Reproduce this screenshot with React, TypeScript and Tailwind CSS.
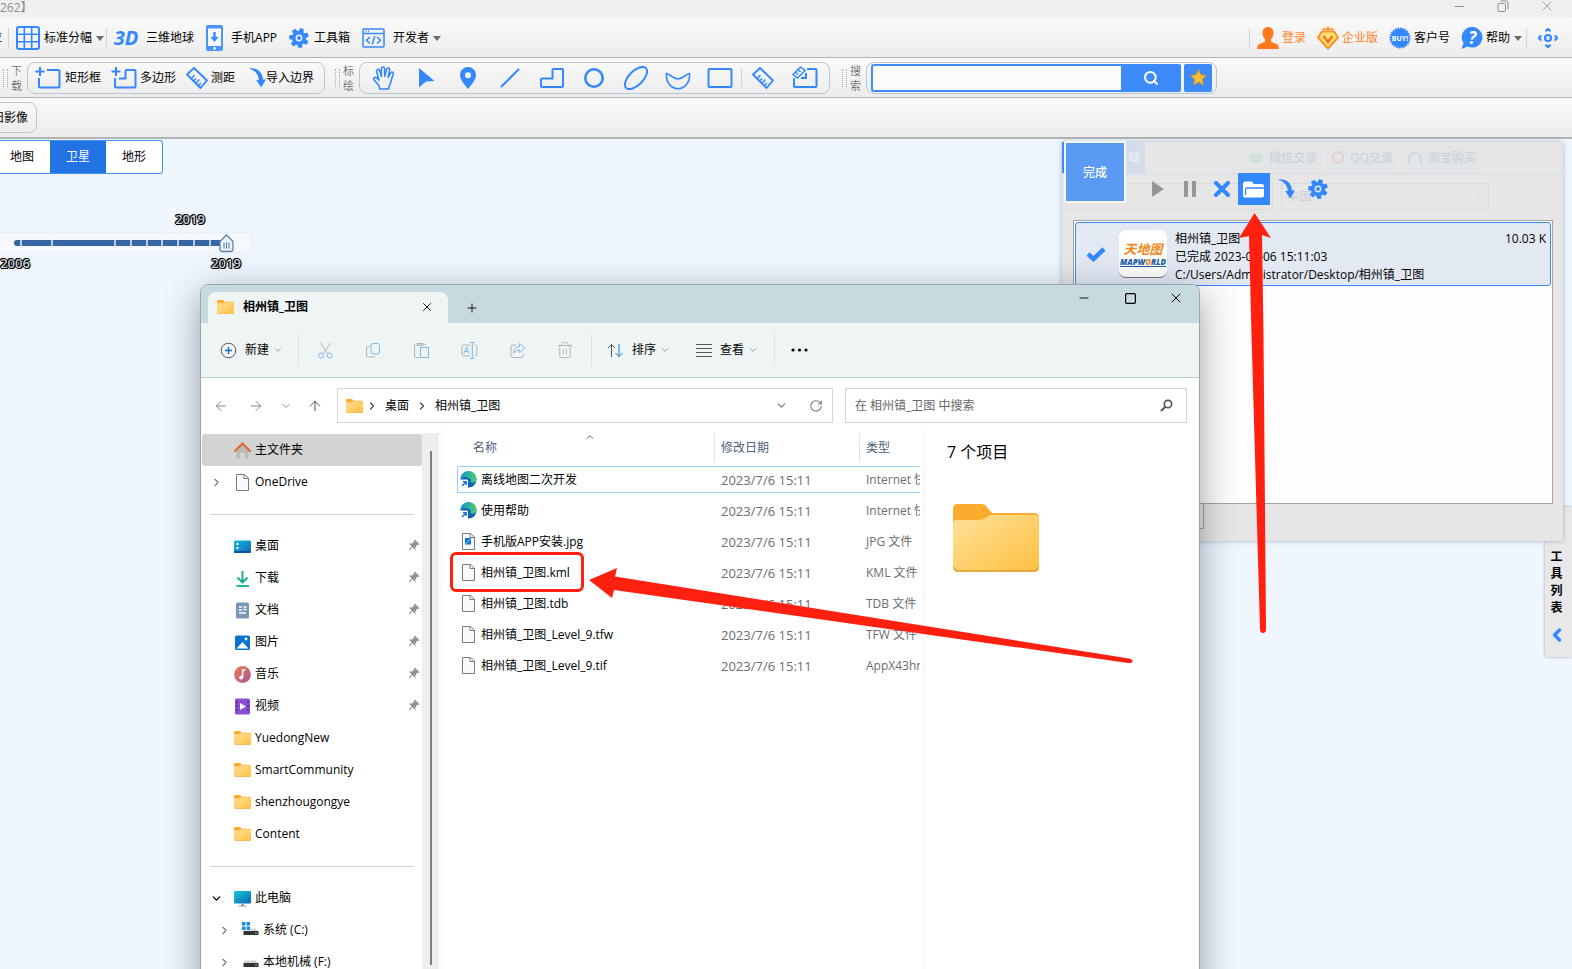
import React from "react";
import {
  ArrowLeft, ArrowRight, ArrowUp, ChevronDown, ChevronRight, ChevronUp, ChevronLeft,
  RotateCw, Trash2, X, Plus, Minus, Square, Search,
} from "lucide-react";
import { MdPushPin } from "react-icons/md";

type Kids = { children?: React.ReactNode };

/* ---------- drawings ---------- */

const Caret = () => (
  <svg width="8" height="5" viewBox="0 0 8 5" aria-hidden="true"><path d="M0 0h8L4 5z" fill="#6b6b6b" /></svg>
);

const GridIcon = () => (
  <svg width="24" height="24" viewBox="0 0 24 24" fill="none" stroke="#3388ff" strokeWidth="2" aria-hidden="true">
    <rect x="1" y="1" width="22" height="22" rx="2" />
    <path d="M8.300 1v22M15.700 1v22M1 8.300h22M1 15.700h22" strokeWidth="1.600" />
  </svg>
);

const PhoneIcon = () => (
  <svg width="17" height="26" viewBox="0 0 17 26" aria-hidden="true">
    <rect width="17" height="26" rx="2" fill="#4a94fb" />
    <rect x="2" y="3.500" width="13" height="17.500" fill="#f6f8fb" />
    <path d="M8.500 7v7" stroke="#3388ff" strokeWidth="2.400" />
    <path d="M4.500 12h8l-4 5z" fill="#3388ff" />
    <circle cx="8.500" cy="23.400" r="1.300" fill="#fff" />
  </svg>
);

const GearIcon = () => (
  <svg width="20" height="20" viewBox="-10 -10 20 20" aria-hidden="true">
    {[0, 1, 2, 3, 4, 5, 6].map((i) => (
      <path key={i} d="M-2.800 -5L-1.900 -9.800h3.800L2.800 -5z" fill="#3388ff" transform={`rotate(${i * 51.43 + 18})`} />
    ))}
    <circle r="5.200" fill="none" stroke="#3388ff" strokeWidth="3.600" />
    <circle r="1.900" fill="#3388ff" />
  </svg>
);

const CodeIcon = () => (
  <svg width="23" height="20" viewBox="0 0 23 20" fill="none" stroke="#3388ff" strokeWidth="1.500" aria-hidden="true">
    <rect x="1" y="1" width="21" height="18" rx="1" />
    <path d="M1 5.500h21M3.500 3.300h1M6 3.300h1M8 9l-3.500 3.200L8 15.500M15 9l3.500 3.200L15 15.500M12.800 8l-2.600 8.500" />
  </svg>
);

const UserIcon = () => (
  <svg width="22" height="22" viewBox="0 0 22 22" fill="#ff7a1a" aria-hidden="true">
    <path d="M11 0c3.600 0 5.500 2.500 5.500 6 0 3-1.200 5-2.500 6.300v2.200c1.500 1.500 7 2 7.500 4.500l.5 3H0l.5-3c.5-2.500 6-3 7.500-4.500v-2.200C6.700 11 5.500 9 5.500 6c0-3.500 1.900-6 5.500-6z" />
  </svg>
);

const GemIcon = () => (
  <svg width="22" height="24" viewBox="0 0 22 24" aria-hidden="true">
    <path d="M5 4L6.500 1.500 9 3l2-3 2 3 2.500-1.500L17 4z" fill="#ff9a2a" />
    <path d="M5 5.500h12l4 6L11 22.500 1 11.500z" fill="#ffe27a" stroke="#ff9226" strokeWidth="2" strokeLinejoin="round" />
    <path d="M6.500 10l4.500 6 4.500-6" fill="none" stroke="#f47a20" strokeWidth="2.600" />
  </svg>
);

const BuyBadge = () => (
  <svg width="22" height="22" viewBox="-11 -11 22 22" aria-hidden="true">
    <circle r="9.500" fill="#3388ff" />
    <circle r="9.800" fill="none" stroke="#3388ff" strokeWidth="1.600" strokeDasharray="1.500 1.050" />
    <text y="2.500" textAnchor="middle" fontSize="7" fontWeight="700" fill="#fff" fontFamily="Open Sans, sans-serif">BUY!</text>
  </svg>
);

const HelpIcon = () => (
  <svg width="22" height="24" viewBox="0 0 22 24" aria-hidden="true">
    <path d="M11.500 1A10.300 10.300 0 1 1 6.500 20.500L.5 23l2-6A10.300 10.300 0 0 1 11.500 1z" fill="#3388ff" />
    <text x="11.500" y="17.500" textAnchor="middle" fontSize="17" fontWeight="700" fontStyle="italic" fill="#fff" fontFamily="Open Sans, sans-serif">?</text>
  </svg>
);

const TargetIcon = () => (
  <svg width="20" height="20" viewBox="0 0 20 20" fill="none" stroke="#3388ff" strokeWidth="2.200" aria-hidden="true">
    <circle cx="10" cy="10" r="3" />
    <path d="M7.500 3.200L10 .9l2.500 2.300M7.500 16.800l2.500 2.300 2.500-2.300M3.200 7.500L.9 10l2.300 2.500M16.800 7.500L19.100 10l-2.300 2.500" />
  </svg>
);

const RectPlusIcon = () => (
  <svg width="26" height="22" viewBox="0 0 26 22" fill="none" stroke="#3388ff" strokeWidth="2" aria-hidden="true">
    <path d="M5 0v9M.5 4.500h9M12 3h11.500a1 1 0 0 1 1 1v15.500a1 1 0 0 1-1 1H5a1 1 0 0 1-1-1V11" />
  </svg>
);

const PolyPlusIcon = () => (
  <svg width="26" height="22" viewBox="0 0 26 22" fill="none" stroke="#3388ff" strokeWidth="2" aria-hidden="true">
    <path d="M5 0v9M.5 4.500h9M4 11v8.500a1 1 0 0 0 1 1h18.500a1 1 0 0 0 1-1V4a1 1 0 0 0-1-1h-8a1 1 0 0 0-1 1v7.500H8" />
  </svg>
);

const RulerIcon = () => (
  <svg width="22" height="22" viewBox="0 0 22 22" fill="none" stroke="#3388ff" strokeWidth="1.900" strokeLinejoin="round" aria-hidden="true">
    <path d="M8 1l13 12.500-6.500 7.500L1 7.500z" />
    <path d="M5.500 11.500l3-3.500M8 13.800l2-2.300M10.400 16l3-3.500M12.800 18.300l2-2.300" strokeWidth="1.500" />
  </svg>
);

const ImportArrow = () => (
  <svg width="17" height="20" viewBox="0 0 17 20" fill="#3388ff" aria-hidden="true">
    <path d="M0 .5C7-.5 13.500 3 14 11.500h3l-4.800 8-5-7.500h2.600C9.800 6 5 2 0 .5z" />
  </svg>
);

const HandIcon = () => (
  <svg width="22" height="24" viewBox="0 0 21 23" fill="none" stroke="#3388ff" strokeWidth="1.500" strokeLinejoin="round" aria-hidden="true">
    <path d="M6.500 22L5.500 18.500 1 13.500Q0 11.800 1.500 11 3 10.500 4.500 12.500L5.700 13.500 3.500 5.500Q3.200 3.800 4.500 3.300 6 3 6.500 4.800L8 10 8 2.500Q8 1 9.500 1 11 1 11 2.500L11.200 10 13 3Q13.500 1.500 15 2 16.200 2.500 15.800 4L14.500 11 17 6.500Q17.800 5.200 19 6 19.800 6.700 19.300 8L17.500 13.500Q17 17 15.500 19L15 22Z" />
  </svg>
);

const S = ({ children }: Kids) => (
  <svg width="26" height="24" viewBox="0 0 26 24" fill="none" stroke="#3388ff" strokeWidth="2" aria-hidden="true">{children}</svg>
);

const DRAW_TOOLS: { name: string; icon: React.ReactNode }[] = [
  { name: "平移", icon: <HandIcon /> },
  { name: "选择", icon: <S><path d="M6 2l15.500 13-8.500.5L6 21.500z" fill="#3388ff" stroke="none" /></S> },
  { name: "标注点", icon: <S><path fillRule="evenodd" stroke="none" fill="#3388ff" d="M13 1a8 8 0 0 1 8 8c0 5-5 10-8 14C10 19 5 14 5 9a8 8 0 0 1 8-8zm0 5.300a3 3 0 1 0 0 6 3 3 0 0 0 0-6z" /></S> },
  { name: "画线", icon: <S><path d="M4 21L22 3" /></S> },
  { name: "多边形", icon: <S><path d="M14.500 3h8.500a1 1 0 0 1 1 1v16a1 1 0 0 1-1 1H3a1 1 0 0 1-1-1v-6.500a1 1 0 0 1 1-1h10.500V4a1 1 0 0 1 1-1z" /></S> },
  { name: "圆", icon: <S><circle cx="13" cy="12" r="8.700" strokeWidth="2.600" /></S> },
  { name: "椭圆", icon: <S><ellipse cx="13" cy="12" rx="14" ry="7" transform="rotate(-45 13 12)" /></S> },
  { name: "扇形", icon: <S><path d="M1.500 7.500C5 8 7.500 12.500 13 13c5.500-.5 8-5 11.500-5.500C25.500 16 20 22.700 13 22.700S.5 16 1.500 7.500z" strokeWidth="1.600" /></S> },
  { name: "矩形", icon: <S><rect x="1.500" y="3" width="23" height="18" rx="1" /></S> },
];

const Folder = ({ w = 17, h = 14 }: { w?: number; h?: number }) => (
  <svg width={w} height={h} viewBox="0 0 86 68" preserveAspectRatio="none" className="shrink-0" aria-hidden="true">
    <defs>
      <linearGradient id="fold" x1="0" y1="0" x2="1" y2="1">
        <stop offset="0" stopColor="#ffe19a" /><stop offset="1" stopColor="#ffc03f" />
      </linearGradient>
    </defs>
    <path d="M0 5q0-5 5-5h23q4 0 6 3l5 6h42q5 0 5 5v20H0z" fill="#fbab2d" />
    <path d="M0 20q0-4 4-4h23q4 0 7-3l3-2h45q4 0 4 4v48q0 5-5 5H5q-5 0-5-5z" fill="url(#fold)" />
    <path d="M1 63q0 4 4 4h76q4 0 4-4" fill="none" stroke="#e0a136" strokeWidth="1.500" />
  </svg>
);

const Page = ({ image = false }: { image?: boolean }) => (
  <svg width="17" height="17" viewBox="0 0 17 17" fill="#fafafa" stroke="#7b7b7b" aria-hidden="true" className="shrink-0">
    <path d="M2.500.5h8L14.500 4v12.500h-12z" /><path d="M10 .5v4h4.500" fill="none" />
    {image && <><rect x="5" y="5" width="6" height="6.500" fill="#1173d0" stroke="none" /><path d="M5.500 11l5-5" stroke="#9bd0ff" /></>}
  </svg>
);

const EdgeIcon = () => (
  <svg width="17" height="17" viewBox="0 0 17 17" aria-hidden="true" className="shrink-0">
    <defs><linearGradient id="edge" x1="0" y1="0" x2="1" y2="0"><stop offset="0" stopColor="#1593d6" /><stop offset="1" stopColor="#4ccf6c" /></linearGradient></defs>
    <circle cx="8.500" cy="8.500" r="8" fill="#0c62b4" />
    <path d="M.5 8A8 8 0 0 1 16.500 8c0 3-2.500 4.200-5 3.600-2-.5-.5-1.600-1-3C9.500 6 3.500 5 .5 8z" fill="url(#edge)" />
    <rect x="0" y="8.500" width="8" height="8" rx="1" fill="#fff" />
    <path d="M2 15l4-4M3 10.800h3.200V14" stroke="#1a73d9" strokeWidth="1.400" fill="none" />
  </svg>
);

const Ic = ({ children }: Kids) => (
  <svg width="17" height="17" viewBox="0 0 17 17" aria-hidden="true" className="shrink-0">{children}</svg>
);

const HomeIcon = () => (
  <Ic>
    <path d="M2.500 8L8.500 2.500 14.500 8v7.500q0 1-1 1H11v-6H6v6H3.500q-1 0-1-1z" fill="#b9b9b9" />
    <path d="M1 9l7.500-7.500L16 9" fill="none" stroke="#e2682a" strokeWidth="2" strokeLinecap="round" />
  </Ic>
);
const DesktopIcon = () => (
  <Ic>
    <defs><linearGradient id="desk" x1="0" y1="0" x2="1" y2="1"><stop offset="0" stopColor="#1cb9e0" /><stop offset="1" stopColor="#0c68b8" /></linearGradient></defs>
    <rect y="2.500" width="17" height="12.500" rx="1" fill="url(#desk)" /><path d="M0 13h17v1q0 1-1 1H1q-1 0-1-1z" fill="#0b559c" /><rect x="2.500" y="5" width="2" height="2" fill="#fff" /><rect x="2.500" y="9" width="2" height="2" fill="#fff" />
  </Ic>
);
const DownloadIcon = () => (
  <Ic><path d="M8.500 1v11M3.500 7.500l5 5 5-5" fill="none" stroke="#17a98c" strokeWidth="1.900" /><path d="M2.500 16h12.500" stroke="#17b58c" strokeWidth="1.900" /></Ic>
);
const DocIcon = () => (
  <Ic><rect x="2" y=".5" width="13" height="16" rx="1.500" fill="#7c97b5" /><path d="M5 5h3M5 8h3M5 11h7M9.500 5h3M9.500 7.500h3" stroke="#fff" strokeWidth="1.500" /></Ic>
);
const PictureIcon = () => (
  <Ic><rect x="1" y="1.500" width="15" height="14.500" rx="1.500" fill="#0a74cf" /><path d="M2.500 14.500L8.500 8l6 6.500z" fill="#fff" /><circle cx="12" cy="5" r="1.400" fill="#fff" /></Ic>
);
const MusicIcon = () => (
  <Ic>
    <defs><linearGradient id="mus" x1="0" y1="0" x2="1" y2="1"><stop offset="0" stopColor="#f0824a" /><stop offset="1" stopColor="#a4529a" /></linearGradient></defs>
    <circle cx="8.500" cy="8.500" r="8.400" fill="url(#mus)" /><circle cx="7.200" cy="11.500" r="2" fill="#fff" /><path d="M8.600 11.500V4h3" fill="none" stroke="#fff" strokeWidth="1.500" />
  </Ic>
);
const VideoIcon = () => (
  <Ic><rect x="1" y=".5" width="15" height="16" rx="1.500" fill="#8a4fd0" /><path d="M3 3v11M14 3v11" stroke="#5a2a9c" strokeWidth="1.600" strokeDasharray="2 2" /><path d="M6 5l6 3.500L6 12z" fill="#fff" /></Ic>
);
const PcIcon = () => (
  <Ic>
    <defs><linearGradient id="pc" x1="0" y1="0" x2="1" y2="1"><stop offset="0" stopColor="#18c5dc" /><stop offset="1" stopColor="#0a6bb0" /></linearGradient></defs>
    <rect y="1" width="17" height="12.500" rx="1" fill="url(#pc)" /><path d="M7 13.500h3v2H7zM4.500 15.500h8v1h-8z" fill="#9aa4ab" />
  </Ic>
);
const DriveIcon = ({ system = false }: { system?: boolean }) => (
  <Ic>
    <path d="M3 6.500h11l2 3H1z" fill="#d4d4d4" /><rect x="1.500" y="9" width="15" height="4" rx=".5" fill="#333" /><rect x="13" y="10.500" width="2" height="1" fill="#4be08a" />
    {system && <><path d="M0 0h8.500v8.500H0z" fill="#fff" /><path d="M0 0h3.500v3.500H0zM4.500 0H8v3.500H4.500zM0 4.500h3.500V8H0zM4.500 4.500H8V8H4.500z" fill="#1a8fe0" /></>}
  </Ic>
);

/* ---------- top bars ---------- */

const Sep = () => <span className="h-5 w-px shrink-0 bg-[#d4d4d4]" />;

const Tool = ({ icon, label, caret, gap = "gap-2" }: { icon?: React.ReactNode; label: string; caret?: boolean; gap?: string }) => (
  <button type="button" className={`flex shrink-0 items-center whitespace-nowrap ${gap}`}>
    {icon}
    <span className="flex items-center gap-1">{label}{caret && <Caret />}</span>
  </button>
);

const Grip = ({ a, b }: { a: string; b: string }) => (
  <div className="flex shrink-0 items-center gap-[3px] font-light text-[#444]">
    <span className="h-[18px] w-[5px] border-x border-dotted border-[#aaa]" />
    <span className="flex w-[12px] flex-col text-[11px] leading-[15px]"><span>{a}</span><span>{b}</span></span>
  </div>
);

const BAR = "flex h-[40px] shrink-0 items-center border-b border-[#b4b4b4] bg-linear-to-b from-[#fafafa] to-[#ececec]";
const GROUP = "flex h-[32px] shrink-0 items-center rounded-lg border border-[#bac8d4]";

function TopBars() {
  return (
    <header>
      <div className="flex h-[18px] items-start justify-between bg-[#f0f0f0] pr-[17px] text-[#8d8d8d]">
        <span className="leading-4">262】</span>
        <div className="flex h-[12px] items-center gap-[30px]">
          <button type="button" aria-label="最小化"><Minus size={15} strokeWidth={1.500} /></button>
          <button type="button" aria-label="还原">
            <svg width="12" height="12" viewBox="0 0 12 12" fill="none" stroke="#8d8d8d"><rect x="1" y="3.500" width="7.500" height="8" rx="1" /><path d="M3.500 1h5.500q2 0 2 2v6" /></svg>
          </button>
          <button type="button" aria-label="关闭"><X size={16} strokeWidth={1.200} /></button>
        </div>
      </div>

      <div className={`${BAR} pt-px`}>
        <div className="-ml-[10px] flex items-center gap-1">
          <button type="button">应</button>
          <span className="flex items-center gap-[7px] pl-[2px]"><Sep /><Tool icon={<GridIcon />} label="标准分幅" caret gap="gap-1" /></span>
        </div>
        <div className="ml-[2px] flex items-center gap-[12px]">
          <span className="flex items-center gap-[6px]">
            <Sep />
            <Tool icon={<span className="w-[26px] font-['Open_Sans'] text-[20px] leading-6 font-bold text-[#3388ff] italic">3D</span>} label="三维地球" gap="gap-[7px]" />
          </span>
          <Tool icon={<PhoneIcon />} label="手机APP" />
          <Tool icon={<GearIcon />} label="工具箱" gap="gap-[5px]" />
          <Tool icon={<CodeIcon />} label="开发者" caret />
        </div>
        <div className="ml-auto flex items-center gap-[11px] pr-[14px]">
          <span className="flex items-center gap-[7px] text-[#ff8427]"><Sep /><Tool icon={<UserIcon />} label="登录" gap="gap-[3px]" /></span>
          <span className="text-[#ff8427]"><Tool icon={<GemIcon />} label="企业版" gap="gap-[3px]" /></span>
          <Tool icon={<BuyBadge />} label="客户号" gap="gap-[3px]" />
          <span className="flex items-center gap-1"><Tool icon={<HelpIcon />} label="帮助" caret gap="gap-[3px]" /><Sep /></span>
          <button type="button" aria-label="定位"><TargetIcon /></button>
        </div>
      </div>

      <div className={`${BAR} pl-[3px]`}>
        <Grip a="下" b="载" />
        <div className={`${GROUP} ml-[4px] w-[298px] gap-[10px] px-[7px]`}>
          <Tool icon={<RectPlusIcon />} label="矩形框" gap="gap-1" />
          <Tool icon={<PolyPlusIcon />} label="多边形" gap="gap-[3px]" />
          <Tool icon={<RulerIcon />} label="测距" gap="gap-[3px]" />
          <span className="pl-1"><Tool icon={<ImportArrow />} label="导入边界" gap="gap-0" /></span>
        </div>
        <div className="w-[10px]" />
        <Grip a="标" b="绘" />
        <div className={`${GROUP} ml-[4px] px-[3px]`}>
          {DRAW_TOOLS.map((t) => (
            <button key={t.name} type="button" aria-label={t.name} className="flex w-[42px] justify-center">{t.icon}</button>
          ))}
          <Sep />
          <button type="button" aria-label="测量距离" className="flex w-[42px] justify-center"><RulerIcon /></button>
          <button type="button" aria-label="测量面积" className="flex w-[42px] justify-center">
            <svg width="26" height="24" viewBox="0 0 26 24" fill="none" stroke="#3388ff" strokeWidth="2" aria-hidden="true">
              <path d="M15 3h8.500a1 1 0 0 1 1 1v16a1 1 0 0 1-1 1H3a1 1 0 0 1-1-1v-8M14 7v5H9" />
              <path d="M1 8.500L8.500 1l4.500 3.500L5.500 12z M4 6.500l2 2M6.500 4l2 2" strokeWidth="1.500" />
            </svg>
          </button>
        </div>
        <div className="w-[12px]" />
        <Grip a="搜" b="索" />
        <div className={`${GROUP} ml-[4px] px-[4px]`}>
          <input id="map-search" aria-label="搜索" className="h-[28px] w-[250px] rounded-l-[3px] border-2 border-r-0 border-[#3d8efc] bg-[#fbfbfb] px-2 outline-none" />
          <button type="button" aria-label="搜索" className="flex h-[28px] w-[60px] items-center justify-center rounded-r-[2px] bg-[#3d8afb] text-white"><Search size={16} strokeWidth={3} /></button>
          <button type="button" aria-label="收藏" className="ml-[3px] flex h-[28px] w-[28px] items-center justify-center rounded-[2px] bg-[#3d8afb]">
            <svg width="17" height="17" viewBox="0 0 17 17" aria-hidden="true"><path d="M8.500.5l2.400 5.200 5.600.7-4.100 3.900 1.100 5.700-5-2.800-5 2.800 1.100-5.700L.5 6.400l5.600-.7z" fill="#f5bd2f" stroke="#c98f1e" strokeWidth=".7" /></svg>
          </button>
        </div>
      </div>

      <div className={BAR}>
        <button type="button" className="-ml-[9px] h-[31px] rounded-lg border border-[#bac8d4] pr-[8px]">旧影像</button>
      </div>
    </header>
  );
}

/* ---------- map controls ---------- */

const YEAR = "block w-[60px] text-center font-['Open_Sans'] text-[13px] leading-[18px] font-semibold text-[#ccd3da] [text-shadow:-1px_0_#000,1px_0_#000,0_-1px_#000,0_1px_#000,1px_1px_#000,-1px_-1px_#000]";

function MapControls() {
  return (
    <div className="flex flex-col items-start pt-px">
      <div className="flex h-[34px] rounded-r-[3px] border border-l-0 border-[#4494f8] bg-white">
        <button type="button" className="w-[50px] pr-[6px]">地图</button>
        <button type="button" className="w-[56px] bg-[#2273e3] text-white">卫星</button>
        <button type="button" className="w-[56px]">地形</button>
      </div>
      <div className="mt-[36px] w-[253px]">
        <div className="flex justify-end pr-[33px]"><span className={YEAR}>2019</span></div>
        <div className="relative mt-1 h-[21px] rounded-r-lg border-y border-r border-[#e8eef5] bg-[#f5f9fe]">
          <svg width="252" height="21" viewBox="0 0 252 21" className="absolute -top-px left-0" aria-hidden="true">
            <rect x="14" y="8" width="212" height="6" rx="3" fill="#3667a4" />
            <path d="M21 7v8M52 7v8M115 7v8M131 7v8M147 7v8M162 7v8M178 7v8M194 7v8M210 7v8" stroke="#e4edf7" strokeWidth="1.500" />
            <path d="M220 9.500L226.500 3 233 9.500V17q0 2.500-2.500 2.500h-8Q220 19.500 220 17z" fill="#eef1f5" stroke="#5f83b0" strokeWidth="1.300" />
            <path d="M224 10.500v6M226.500 10.500v6M229 10.500v6" stroke="#4a74a8" />
          </svg>
          <input type="range" min={2006} max={2019} defaultValue={2019} aria-label="年份" className="absolute inset-0 w-full opacity-0" />
        </div>
        <div className="-mr-[3px] -ml-[15px] flex justify-between pt-px"><span className={YEAR}>2006</span><span className={YEAR}>2019</span></div>
      </div>
    </div>
  );
}

/* ---------- download panel ---------- */

const PB = "flex h-[32px] w-[32px] items-center justify-center";

function GhostChat({ icon, label }: { icon: React.ReactNode; label: string }) {
  return <span className="flex h-[22px] items-center gap-[6px] rounded border border-[#dfe3e6] bg-[#e2e6e8] px-1 whitespace-nowrap">{icon}{label}</span>;
}

function DownloadPanel() {
  return (
    <section className="absolute top-[3px] right-[9px] flex h-[399px] w-[501px] flex-col rounded-[2px] bg-[#e6e6e6] shadow-[0_0_5px_rgba(60,80,110,0.4)]">
      <div className="absolute inset-x-0 top-0 h-[78px] overflow-hidden text-[#cbced1]" aria-hidden="true">
        <div className="flex h-[33px] items-center border-b-2 border-[#dae1eb]">
          <span className="h-full w-[83px] border-l-2 border-[#3d8afb] bg-[#d3dce9] pr-[5px] text-right leading-[32px] text-white/60">域</span>
          <div className="ml-auto flex gap-[5px] pr-[82px]">
            <GhostChat icon={<span className="h-[10px] w-[14px] rounded-full bg-[#d0e2d5]" />} label="微信交谈" />
            <GhostChat icon={<span className="h-[13px] w-[12px] rounded-full border-2 border-[#e3cdc9]" />} label="QQ交谈" />
            <GhostChat icon={<span className="h-[12px] w-[14px] rounded-t-full border-2 border-b-0 border-[#ccdae4]" />} label="淘宝购买" />
          </div>
        </div>
        <div className="mt-[8px] flex gap-2 pl-1">
          <span className="h-[27px] w-[207px] border border-[#dadada]" />
          <span className="flex h-[27px] w-[208px] items-center justify-between border border-[#dadada] pr-1 pl-[5px]">中国<ChevronDown size={10} /></span>
        </div>
      </div>
      <div className="absolute top-[361px] left-0 h-[26px] w-[142px] rounded-br-[2px] border-r border-b border-[#a0a0a0] bg-[#ececec]" />
      <div className="relative flex h-[78px] shrink-0 pt-px pl-1">
        <div className="h-[58px] w-[58px] bg-[#5a9af3] text-center leading-[60px] font-medium text-white shadow-[0_0_0_2px_#f6f6f6]">完成</div>
        <div className="flex items-start pt-[30px] pl-[18px]">
          <button type="button" aria-label="开始" className={PB}><svg width="12" height="16" viewBox="0 0 12 16"><path d="M0 0l12 8-12 8z" fill="#969696" /></svg></button>
          <button type="button" aria-label="暂停" className={PB}><svg width="12" height="16" viewBox="0 0 12 16"><path d="M0 0h4v16H0zM8 0h4v16H8z" fill="#969696" /></svg></button>
          <button type="button" aria-label="删除" className={PB}><svg width="16" height="16" viewBox="0 0 16 16"><path d="M2 2l12 12M14 2L2 14" stroke="#3388ff" strokeWidth="4" strokeLinecap="round" /></svg></button>
          <button type="button" aria-label="打开文件夹" className={`${PB} bg-[#3388ff]`}>
            <svg width="22" height="17" viewBox="0 0 22 17"><path d="M0 3q0-2.500 2-2.500h7L10.500 3H19q2 0 2 2v9.500q0 2-2 2H2q-2 0-2-2z" fill="#fff" /><path d="M2.500 14V9q0-2 2-2h17" fill="none" stroke="#3388ff" strokeWidth="1.300" /></svg>
          </button>
          <button type="button" aria-label="导入" className={PB}><ImportArrow /></button>
          <button type="button" aria-label="设置" className={PB}><GearIcon /></button>
        </div>
      </div>
      <div className="relative mr-[10px] mb-[37px] ml-[11px] flex-1 border border-[#a5a5a5] bg-[#fdfdfd] p-px">
        <article className="flex h-[64px] rounded-[3px] border border-[#3d8afb] bg-[#e3e9f3] pr-1 pl-[10px]">
          <svg width="20" height="16" viewBox="0 0 20 16" className="mt-[23px] shrink-0"><path d="M2 8l5.500 5L18 3" fill="none" stroke="#3388ff" strokeWidth="4.500" /></svg>
          <div className="mt-[7px] ml-[13px] flex h-[48px] w-[48px] shrink-0 flex-col items-center justify-center rounded-[7px] border-b border-[#777] bg-white font-bold">
            <span className="text-[13px] leading-[15px] text-[#f08a1e] italic">天地图</span>
            <span className="font-['Open_Sans'] text-[8px] leading-[9px] font-extrabold text-[#1a5fa8] italic underline">MAPW<span className="text-[#f08a1e]">O</span>RLD</span>
          </div>
          <div className="mt-[7px] ml-[8px] flex-1 leading-[18px] whitespace-nowrap">
            <div className="flex justify-between"><span>相州镇_卫图</span><span>10.03 K</span></div>
            <div>已完成 2023-07-06 15:11:03</div>
            <div>C:/Users/Administrator/Desktop/相州镇_卫图</div>
          </div>
        </article>
      </div>
    </section>
  );
}

function ToolTab() {
  return (
    <aside className="absolute top-[368px] right-0 flex h-[150px] w-[27px] flex-col items-center rounded-l-[3px] bg-[#e8e8ea] pr-[4px] text-[#3388ff] shadow-[0_0_3px_rgba(60,80,110,0.5)]">
      <ChevronLeft size={18} strokeWidth={3} className="mt-[9px] opacity-10" />
      <button type="button" className="mt-[14px] flex flex-col items-center">
        {["工", "具", "列", "表"].map((c) => <span key={c} className="leading-[17px] font-bold text-black">{c}</span>)}
        <ChevronLeft size={20} strokeWidth={4} className="mt-[9px]" />
      </button>
    </aside>
  );
}

/* ---------- file explorer ---------- */

const IB = "flex h-8 w-12 items-center justify-center text-[#b0b5b8]";
const DROP = "flex items-center gap-2 px-2 whitespace-nowrap";

const Line = () => <span className="h-8 w-px bg-[#dde3e4]" />;

function Toolbar() {
  return (
    <div className="flex h-[55px] shrink-0 items-center border-b border-[#bccbd0] bg-[#eff4f5] pl-[11px]">
      <button type="button" className={DROP}>
        <svg width="17" height="17" viewBox="0 0 17 17" fill="none"><circle cx="8.500" cy="8.500" r="7.300" stroke="#555" /><path d="M8.500 5v7M5 8.500h7" stroke="#0a6fc2" strokeWidth="1.300" /></svg>
        新建<ChevronDown size={10} className="-ml-1 text-[#888]" />
      </button>
      <span className="w-[7px]" /><Line /><span className="w-[2px]" />
      <button type="button" aria-label="剪切" className={IB}>
        <svg width="17" height="17" viewBox="0 0 17 17" fill="none"><path d="M3.500 1l7 10.500M13.500 1l-7 10.500" stroke="#b0b5b8" /><circle cx="4" cy="13.500" r="2.500" stroke="#7dbbe8" /><circle cx="12.500" cy="13.500" r="2.500" stroke="#7dbbe8" /></svg>
      </button>
      <button type="button" aria-label="复制" className={IB}>
        <svg width="17" height="17" viewBox="0 0 17 17" fill="none"><path d="M4.500 4.500H3q-1.500 0-1.500 1.500v7q0 2 2 2h5q1.500 0 1.500-1" stroke="#b0b5b8" /><rect x="6" y="1.500" width="8.500" height="10.500" rx="2" stroke="#7dbbe8" /></svg>
      </button>
      <button type="button" aria-label="粘贴" className={IB}>
        <svg width="17" height="17" viewBox="0 0 17 17" fill="none"><path d="M6 15.500H3q-1.500 0-1.500-1.500V3.500Q1.500 2 3 2h8q1.500 0 1.500 1.500M4.500 1.500h5.500v2H4.500z" stroke="#b0b5b8" /><rect x="7.500" y="5.500" width="8" height="10" stroke="#7dbbe8" /></svg>
      </button>
      <button type="button" aria-label="重命名" className={IB}>
        <svg width="17" height="17" viewBox="0 0 17 17" fill="none"><path d="M9 3H3Q1 3 1 5v7q0 2 2 2h6M13.500 3q2.500 0 2.500 2v7q0 2-2.500 2" stroke="#b0b5b8" /><path d="M9 .5h4.500M9 16.500h4.500M11.300.5v16M3 11.500l2.500-6.500L8 11.500M4 9.500h3" stroke="#7dbbe8" /></svg>
      </button>
      <button type="button" aria-label="共享" className={IB}>
        <svg width="17" height="17" viewBox="0 0 17 17" fill="none"><path d="M7 3H4Q2 3 2 5v8.500q0 2 2 2h8.500q2 0 2-2V12" stroke="#b0b5b8" /><path d="M10.500 1.500L16 6l-5.500 4.500V8Q7 8 4.500 11 5 5 10.500 4.500z" stroke="#7dbbe8" /></svg>
      </button>
      <button type="button" aria-label="删除" className={IB}><Trash2 size={18} strokeWidth={1.200} /></button>
      <span className="w-[2px]" /><Line /><span className="w-[7px]" />
      <button type="button" className={DROP}>
        <svg width="17" height="15" viewBox="0 0 17 15" fill="none"><path d="M4.500 14V1.500M1 5l3.500-3.500L8 5" stroke="#555" /><path d="M12 1v12.500M8.500 10l3.500 3.500 3.500-3.500" stroke="#0a7ad0" /></svg>
        排序<ChevronDown size={10} className="-ml-1 text-[#888]" />
      </button>
      <span className="w-[10px]" />
      <button type="button" className={DROP}>
        <svg width="16" height="13" viewBox="0 0 16 13"><path d="M0 .5h16M0 4.500h16M0 8.500h16M0 12.500h16" stroke="#555" /></svg>
        查看<ChevronDown size={10} className="-ml-1 text-[#888]" />
      </button>
      <span className="w-[8px]" /><Line />
      <button type="button" aria-label="更多" className="flex h-8 w-12 items-center justify-center"><svg width="17" height="4" viewBox="0 0 17 4"><circle cx="2" cy="2" r="1.600" /><circle cx="8.500" cy="2" r="1.600" /><circle cx="15" cy="2" r="1.600" /></svg></button>
    </div>
  );
}

function AddressRow() {
  return (
    <div className="flex h-[55px] shrink-0 items-center pr-[12px] pl-[2px] text-[#8a8a8a]">
      <button type="button" aria-label="后退" className="flex w-[35px] justify-center"><ArrowLeft size={16} strokeWidth={1.500} /></button>
      <button type="button" aria-label="前进" className="flex w-[35px] justify-center"><ArrowRight size={16} strokeWidth={1.500} /></button>
      <button type="button" aria-label="最近位置" className="flex w-[26px] justify-center"><ChevronDown size={12} strokeWidth={2} /></button>
      <button type="button" aria-label="上一级" className="flex w-[32px] justify-center text-[#555]"><ArrowUp size={16} strokeWidth={1.500} /></button>
      <nav className="ml-[6px] flex h-[35px] flex-1 items-center gap-[3px] border border-[#d6d6d6] px-2 text-black">
        <Folder />
        <ChevronRight size={12} strokeWidth={2.500} className="text-[#444]" />
        <button type="button" className="px-1">桌面</button>
        <ChevronRight size={12} strokeWidth={2.500} className="text-[#444]" />
        <button type="button" className="px-1">相州镇_卫图</button>
        <button type="button" aria-label="展开" className="mr-[18px] ml-auto text-[#777]"><ChevronDown size={13} /></button>
        <button type="button" aria-label="刷新" className="mr-[1px] text-[#777]"><RotateCw size={14} strokeWidth={1.800} /></button>
      </nav>
      <div className="ml-[12px] flex h-[35px] w-[342px] shrink-0 items-center border border-[#d6d6d6] pr-[13px] pl-[9px]">
        <input id="file-search" aria-label="搜索文件" placeholder="在 相州镇_卫图 中搜索" className="min-w-0 flex-1 outline-none placeholder:text-[#666]" />
        <svg width="13" height="13" viewBox="0 0 13 13" fill="none" stroke="#555" strokeWidth="1.700" aria-hidden="true"><circle cx="8" cy="5" r="3.700" /><path d="M5.300 7.700L1 12" strokeWidth="2" /></svg>
      </div>
    </div>
  );
}

function SideItem({ icon, label, pin, chevron, active, nested }: { icon: React.ReactNode; label: string; pin?: boolean; chevron?: "right" | "down"; active?: boolean; nested?: boolean }) {
  return (
    <li>
      <a href="#" className={`flex h-8 items-center rounded-[2px] pr-[2px] ${nested ? "pl-[16px]" : "pl-[8px]"} ${active ? "bg-[#d3d3d3]" : ""}`}>
        <span className="flex w-[24px] shrink-0 text-[#777]">
          {chevron === "right" && <ChevronRight size={13} />}
          {chevron === "down" && <ChevronDown size={13} strokeWidth={2.500} className="text-black" />}
        </span>
        {icon}
        <span className="ml-1 flex-1 whitespace-nowrap">{label}</span>
        {pin && <MdPushPin size={14} className="rotate-45 text-[#87949c]" />}
      </a>
    </li>
  );
}

const SideLine = () => <li className="flex h-8 items-center pr-[8px] pl-[8px]"><span className="h-px w-full bg-[#d2d2d2]" /></li>;

function Sidebar() {
  return (
    <ul className="w-[221px] shrink-0 overflow-hidden pt-px pl-px">
      <SideItem icon={<HomeIcon />} label="主文件夹" active />
      <SideItem icon={<Page />} label="OneDrive" chevron="right" />
      <SideLine />
      <SideItem icon={<DesktopIcon />} label="桌面" pin />
      <SideItem icon={<DownloadIcon />} label="下载" pin />
      <SideItem icon={<DocIcon />} label="文档" pin />
      <SideItem icon={<PictureIcon />} label="图片" pin />
      <SideItem icon={<MusicIcon />} label="音乐" pin />
      <SideItem icon={<VideoIcon />} label="视频" pin />
      <SideItem icon={<Folder />} label="YuedongNew" />
      <SideItem icon={<Folder />} label="SmartCommunity" />
      <SideItem icon={<Folder />} label="shenzhougongye" />
      <SideItem icon={<Folder />} label="Content" />
      <SideLine />
      <SideItem icon={<PcIcon />} label="此电脑" chevron="down" />
      <SideItem icon={<DriveIcon system />} label="系统 (C:)" chevron="right" nested />
      <SideItem icon={<DriveIcon />} label="本地机械 (F:)" chevron="right" nested />
    </ul>
  );
}

const FILES: { name: string; type: string; icon: React.ReactNode; focus?: boolean; mark?: boolean }[] = [
  { name: "离线地图二次开发", type: "Internet 快捷方式", icon: <EdgeIcon />, focus: true },
  { name: "使用帮助", type: "Internet 快捷方式", icon: <EdgeIcon /> },
  { name: "手机版APP安装.jpg", type: "JPG 文件", icon: <Page image /> },
  { name: "相州镇_卫图.kml", type: "KML 文件", icon: <Page />, mark: true },
  { name: "相州镇_卫图.tdb", type: "TDB 文件", icon: <Page /> },
  { name: "相州镇_卫图_Level_9.tfw", type: "TFW 文件", icon: <Page /> },
  { name: "相州镇_卫图_Level_9.tif", type: "AppX43hnxtbyyps62", icon: <Page /> },
];

function FileTable() {
  return (
    <div className="relative -mt-1 min-w-0 flex-1 border-x border-[#f3f3f3] pr-[3px] pl-[3px]">
      <div className="overflow-hidden pl-[12px]">
        <table className="w-full table-fixed border-separate border-spacing-x-0 border-spacing-y-[4px] text-left whitespace-nowrap">
          <thead className="text-[#4c607a]">
            <tr className="h-[29px]">
              <th className="w-[257px] p-0 pl-4 font-normal">名称</th>
              <th className="w-[145px] border-l border-[#e2e2e2] p-0 pl-[6px] font-normal">修改日期</th>
              <th className="border-l border-[#e2e2e2] p-0 pl-[6px] font-normal">类型</th>
            </tr>
          </thead>
          <tbody className="text-[#6d6d6d]">
            {FILES.map((f) => {
              const edge = f.focus ? "border-[#99d1ff]" : "border-transparent";
              return (
                <tr key={f.name} className="h-[27px]">
                  <td className={`relative border-y border-l p-0 pl-[2px] text-black ${edge}`}>
                    <span className="flex items-center gap-1">{f.icon}{f.name}</span>
                    {f.mark && <span className="absolute -top-[8px] -left-[8px] h-[40px] w-[134px] rounded-md border-3 border-[#ff2010]" />}
                  </td>
                  <td className={`border-y p-0 pl-[7px] leading-[16px] font-['Open_Sans'] text-[13px] ${edge}`}>2023/7/6 15:11</td>
                  <td className={`border-y p-0 pl-[7px] ${edge}`}>{f.type}</td>
                </tr>
              );
            })}
          </tbody>
        </table>
      </div>
      <ChevronUp size={12} className="absolute top-[2px] left-[142px] text-[#666]" />
    </div>
  );
}

function Explorer() {
  return (
    <section className="absolute top-[284px] left-[200px] flex h-[720px] w-[1000px] flex-col overflow-hidden rounded-t-lg border border-[#9aa5ab] bg-white shadow-[0_10px_36px_rgba(20,30,50,0.42)]">
      <div className="flex h-[38px] shrink-0 items-end bg-[#c8dadf] pl-[7px]">
        <div className="flex h-[31px] w-[240px] items-center rounded-t-lg bg-[#eff4f5] pr-[14px] pb-px pl-[9px]">
          <Folder />
          <span className="ml-[9px] flex-1 font-bold">相州镇_卫图</span>
          <button type="button" aria-label="关闭标签页"><X size={14} strokeWidth={1.500} /></button>
        </div>
        <button type="button" aria-label="新标签页" className="flex h-[31px] w-[48px] items-center justify-center"><Plus size={14} strokeWidth={1.500} /></button>
        <div className="mb-[11px] ml-auto flex h-[28px] items-center">
          <button type="button" aria-label="最小化" className="flex w-[46px] justify-center"><Minus size={14} strokeWidth={1.500} /></button>
          <button type="button" aria-label="最大化" className="flex w-[46px] justify-center"><Square size={13} strokeWidth={2.200} /></button>
          <button type="button" aria-label="关闭" className="flex w-[46px] justify-center"><X size={16} strokeWidth={1.500} /></button>
        </div>
      </div>
      <Toolbar />
      <AddressRow />
      <div className="flex min-h-0 flex-1">
        <Sidebar />
        <div className="flex w-[17px] shrink-0 justify-center bg-[#eeeeee] pt-[18px] pb-[38px]"><span className="w-[2px] bg-[#7d7d7d]" /></div>
        <span className="w-[2px]" />
        <FileTable />
        <div className="w-[275px] shrink-0 pt-[7px] pl-[23px]">
          <h2 className="text-[16px] leading-6">7 个项目</h2>
          <div className="pt-[40px] pl-[6px]"><Folder w={86} h={68} /></div>
        </div>
      </div>
    </section>
  );
}

export default function App() {
  return (
    <div className="relative flex h-screen flex-col overflow-hidden bg-[#eff6fe] font-['Open_Sans','Noto_Sans_CJK_SC',sans-serif] text-[12px] leading-[18px] text-black">
      <TopBars />
      <main className="relative flex-1 border-t border-[#b4b4b4]">
        <MapControls />
        <ToolTab />
        <DownloadPanel />
      </main>
      <Explorer />
      <svg width="1572" height="969" viewBox="0 0 1572 969" className="pointer-events-none absolute top-0 left-0" fill="#ff2010" aria-hidden="true">
        <path d="M1254.500 213L1271 238l-9-3 1.500 100 2.500 294q0 4-3 4t-3-4l-8.500-294L1249 236l-10 2z" />
        <path d="M589 580l28-12-2 8.500 514 82q4 1 3.500 3t-4.500 1.500L614 590l-2 8z" />
      </svg>
    </div>
  );
}
